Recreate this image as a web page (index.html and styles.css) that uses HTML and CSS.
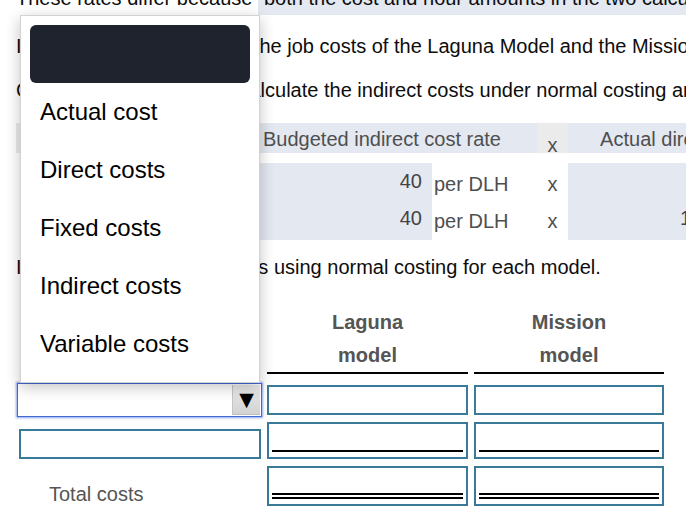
FILE: index.html
```html
<!DOCTYPE html>
<html lang="en">
<head>
<meta charset="utf-8">
<title>Normal costing</title>
<link rel="stylesheet" href="styles.css">
</head>
<body>
<div class="page">
  <p class="q q-first">These rates differ because <span class="answer">both the cost and hour amounts in the two calculations are different.</span></p>
  <p class="q q-2">In the next parts, compare the job costs of the Laguna Model and the Mission Model.</p>
  <p class="q q-3">Complete the table, then calculate the indirect costs under normal costing and actual costing.</p>

  <div class="rates">
    <div class="rates-grid rates-head">
      <div class="hc hc-label"></div>
      <div class="hc hc-budget">Budgeted indirect cost rate</div>
      <div class="hc hc-x">x</div>
      <div class="hc hc-actual">Actual direct labor-hours</div>
    </div>
    <div class="rates-body">
      <div class="rates-grid rates-row r1">
        <div class="rc rc-label">Laguna Model</div>
        <div class="rc rc-num">40</div>
        <div class="rc rc-unit">per DLH</div>
        <div class="rc rc-x">x</div>
        <div class="rc rc-val">800</div>
        <div class="rc rc-unit">DLH</div>
      </div>
      <div class="rates-grid rates-row r2">
        <div class="rc rc-label">Mission Model</div>
        <div class="rc rc-num">40</div>
        <div class="rc rc-unit">per DLH</div>
        <div class="rc rc-x">x</div>
        <div class="rc rc-val">1,200</div>
        <div class="rc rc-unit">DLH</div>
      </div>
    </div>
  </div>

  <p class="q q-4">Indicate the overall job costs using normal costing for each model.</p>

  <div class="costs">
    <div class="ch-empty"></div>
    <div class="ch">Laguna<br>model</div>
    <div class="ch">Mission<br>model</div>

    <div class="select" role="combobox" aria-expanded="true">
      <span class="select-btn">▼</span>
    </div>
    <div class="box box-plain"></div>
    <div class="box box-plain"></div>

    <div class="field"></div>
    <div class="box box-single"><div class="rule rule-single"></div></div>
    <div class="box box-single"><div class="rule rule-single"></div></div>

    <div class="total-label">Total costs</div>
    <div class="box box-double"><div class="rule rule-double"></div></div>
    <div class="box box-double"><div class="rule rule-double"></div></div>
  </div>
</div>

<ul class="menu" role="listbox">
  <li class="opt opt-selected"></li>
  <li class="opt">Actual cost</li>
  <li class="opt">Direct costs</li>
  <li class="opt">Fixed costs</li>
  <li class="opt">Indirect costs</li>
  <li class="opt">Variable costs</li>
</ul>
</body>
</html>
```

FILE: styles.css
```css
html, body {
  margin: 0;
  padding: 0;
  overflow: hidden;
  background: #ffffff;
}

body {
  position: relative;
  font-family: "Liberation Sans", Arial, sans-serif;
  font-size: 20px;
  color: #0d0d0d;
}

.page {
  margin-top: -18px;
  padding-left: 16px;
}

.q {
  margin: 0;
  line-height: 24px;
  white-space: nowrap;
}

.answer {
  display: inline-block;
  padding: 4px 6px 5px 6px;
  background: #e3e8f1;
}

.q-2 { margin-top: 19px; }
.q-3 { margin-top: 20px; }
.q-4 { margin-top: 17px; }

/* rate table */
.rates {
  margin-top: 21px;
  color: #4f4f4f;
}

.rates-grid {
  display: grid;
  grid-template-columns: 211px 205px 105px 31px 172px 109px;
  width: 833px;
}

.rates-head {
  height: 30px;
}

.hc {
  box-sizing: border-box;
  height: 30px;
  line-height: 28px;
  padding-top: 2px;
  background: #e3e8f1;
  white-space: nowrap;
}

.hc-label { background: #ebebeb; }
.hc-budget { grid-column: span 2; text-align: center; }
.hc-x {
  background: #ebebeb;
  text-align: center;
  padding-top: 8px;
}
.hc-actual { grid-column: span 2; text-align: center; }

.rates-body {
  margin-top: 10px;
}

.r1 { height: 37px; line-height: 37px; }
.r2 { height: 38px; line-height: 37px; }

.rc {
  box-sizing: border-box;
  white-space: nowrap;
}

.rc-label {
  color: transparent;
  background: #ffffff;
}

.rc-num {
  background: #e3e8f1;
  text-align: right;
  padding-right: 10px;
  color: #444444;
}

.rc-unit {
  padding-left: 2px;
  padding-top: 3px;
}

.rc-x {
  text-align: center;
  padding-top: 3px;
}

.rc-val {
  background: #e3e8f1;
  text-align: right;
  padding-right: 10px;
  color: #444444;
}

/* cost table */
.costs {
  margin-top: 27px;
  display: grid;
  grid-template-columns: 245px 201px 190px;
  grid-template-rows: 68px 43px 42px 47px;
  column-gap: 6px;
}

.ch {
  box-sizing: border-box;
  height: 68px;
  line-height: 33px;
  text-align: center;
  font-weight: bold;
  color: #555555;
  border-bottom: 2px solid #000000;
}

.box {
  box-sizing: border-box;
  border: 2px solid #3a7a99;
  background: #ffffff;
  align-self: end;
}

.box-plain {
  height: 30px;
  margin-bottom: 2px;
}

.box-single { height: 37px; }
.box-double { height: 40px; }

.rule {
  box-sizing: border-box;
  margin: 0 3px;
}

.rule-single {
  height: 28px;
  border-bottom: 2px solid #000000;
}

.rule-double {
  height: 31px;
  border-bottom: 6px double #000000;
}

.select {
  box-sizing: border-box;
  align-self: end;
  margin-left: 1px;
  width: 245px;
  height: 34px;
  padding: 1px;
  border: 1px solid #4169d6;
  box-shadow: 0 0 2px 1px rgba(80, 115, 225, 0.65);
  background: #ffffff;
  display: flex;
  justify-content: flex-end;
}

.select-btn {
  box-sizing: border-box;
  width: 28px;
  height: 30px;
  border-left: 1px solid #c4c4c4;
  border-bottom: 1px solid #bdbdbd;
  background: linear-gradient(#ececec, #d2d2d2);
  display: flex;
  align-items: center;
  justify-content: center;
  font-family: "DejaVu Sans", sans-serif;
  font-size: 19px;
  line-height: 1;
  color: #000000;
}

.field {
  box-sizing: border-box;
  align-self: end;
  margin-left: 3px;
  width: 242px;
  height: 30px;
  border: 2px solid #3a7a99;
}

.total-label {
  align-self: end;
  padding-left: 33px;
  font-size: 20px;
  line-height: 24px;
  color: #555555;
}

/* open dropdown list */
.menu {
  position: absolute;
  left: 20px;
  top: 15px;
  z-index: 10;
  box-sizing: border-box;
  width: 240px;
  height: 368px;
  margin: 0;
  padding: 9px;
  list-style: none;
  background: #ffffff;
  border: 1px solid #d2d2d2;
  box-shadow: 0 4px 14px rgba(0, 0, 0, 0.24);
}

.opt {
  height: 58px;
  line-height: 58px;
  padding-left: 10px;
  font-size: 24px;
  color: #000000;
  white-space: nowrap;
}

.opt-selected {
  background: #1f232e;
  border-radius: 6px;
}
```
